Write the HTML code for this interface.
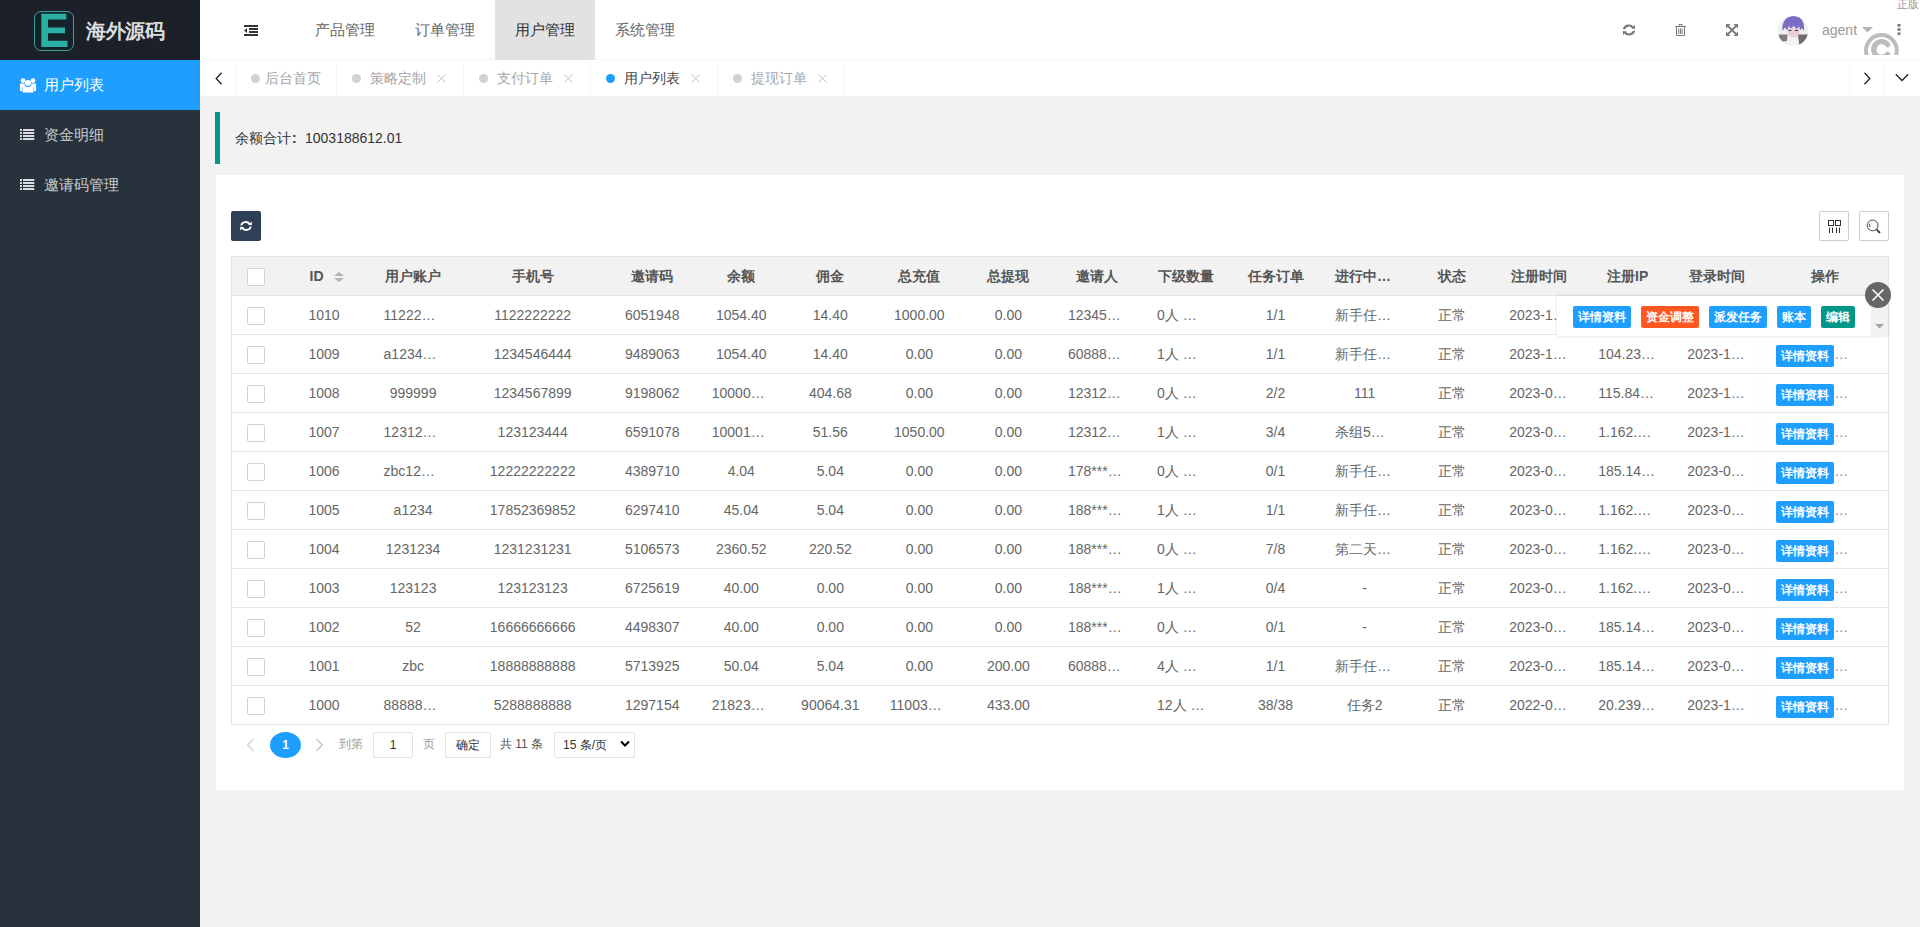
<!DOCTYPE html>
<html><head><meta charset="utf-8">
<style>
*{margin:0;padding:0;box-sizing:border-box}
html,body{width:1920px;height:927px;overflow:hidden;background:#f2f2f2;font-family:"Liberation Sans",sans-serif;font-size:14px;color:#666}
i{font-style:normal}
.abs{position:absolute}
#side{position:absolute;left:0;top:0;width:200px;height:927px;background:#28323c}
#logo{position:absolute;left:0;top:0;width:200px;height:60px;background:#1c2029}
#logo .box{position:absolute;left:34px;top:11px;width:40px;height:40px;border:1.5px solid #3f9e95;border-radius:7px;background:#14232a}
#logo .t{position:absolute;left:86px;top:17px;font-size:20px;font-weight:bold;color:#dedede;line-height:28px;letter-spacing:-0.5px}
.menu{position:absolute;left:0;width:200px;height:50px;color:rgba(255,255,255,.75);font-size:15px;line-height:50px}
.menu.on{background:#1E9FFF;color:#fff}
.menu span{position:absolute;left:44px;top:0}
.menu svg{position:absolute;left:20px}
#hdr{position:absolute;left:200px;top:0;width:1720px;height:60px;background:#fff;border-bottom:1px solid #f6f6f6}
.nav{position:absolute;top:0;height:60px;width:100px;line-height:60px;text-align:center;font-size:15px;color:#666}
.nav.on{background:#e2e2e2;color:#333}
#tabs{position:absolute;left:200px;top:60px;width:1720px;height:36px;background:#fff}
.tab{position:absolute;top:0;height:36px;line-height:36px;border-right:1px solid #f6f6f6;font-size:14px;color:#a6a6a6}
.tab .dot{position:absolute;top:14px;width:9px;height:9px;border-radius:50%;background:#d2d2d2}
.tab .tx{position:absolute;top:0}
.tab svg{position:absolute;top:14px}
#quote{position:absolute;left:215px;top:112px;width:1690px;height:52px;border-left:5px solid #009688;background:#f2f2f2}
#quote span{position:absolute;left:15px;top:17px;line-height:18px;color:#333;font-size:14px}
#card{position:absolute;left:216px;top:175px;width:1688px;height:615px;background:#fff;border-radius:2px}
#tbl{position:absolute;left:231px;top:256px;width:1658px;border:1px solid #e6e6e6;border-collapse:collapse;table-layout:fixed}
#tbl td,#tbl th{height:39px;border-bottom:1px solid #e6e6e6;text-align:center;padding:0 15px;white-space:nowrap;overflow:hidden;font-weight:normal;line-height:20px}
#tbl th{background:#f2f2f2;color:#555;font-weight:bold}
#tbl .l{text-align:left}
#tbl td.op{text-align:left;padding-left:15px}
#tbl td.op .btn{position:relative;top:2px}
.cb{display:inline-block;width:18px;height:18px;border:1px solid #d2d2d2;border-radius:2px;background:#fff;vertical-align:middle}
.btn{display:inline-block;height:22px;line-height:22px;padding:0 5px;font-size:12px;color:#fff;border-radius:2px;background:#1E9FFF;vertical-align:middle;font-weight:bold}
.more{color:#888;position:relative;top:1px}
#tbl th.id{text-align:left;padding-left:30px;position:relative}
.sort{position:absolute;left:54px;top:14px;width:10px;height:12px}
.sort:before{content:"";position:absolute;left:0;top:0.5px;border-left:5px solid transparent;border-right:5px solid transparent;border-bottom:4.5px solid #b2b2b2}
.sort:after{content:"";position:absolute;left:0;top:7px;border-left:5px solid transparent;border-right:5px solid transparent;border-top:4.5px solid #b2b2b2}
.tool{position:absolute;top:211px;width:30px;height:30px;border:1px solid #ccc;border-radius:2px;background:#fff}
#pop{position:absolute;left:1557px;top:296px;width:331px;height:40px;background:#fff;box-shadow:0 0 3px rgba(0,0,0,.15)}
#pop .btn{position:absolute;top:10px}
#pop .sb{position:absolute;right:0;top:0;width:17px;height:40px;background:#f1f1f1}
#close{position:absolute;left:1865px;top:282px;width:26px;height:26px;border-radius:50%;background:#666}
.pg{position:absolute;top:732px;height:26px;line-height:24px;font-size:12px}
.pgb{border:1px solid #e2e2e2;border-radius:2px;background:#fff;text-align:center}
</style></head><body>
<div id="side">
  <div id="logo">
    <div class="box"></div>
    <svg class="abs" style="left:41px;top:13px" width="27" height="35" viewBox="0 0 27 35"><path d="M0.3 0.8H25.3V6.6H7V14.5H24V20.3H7V27.8H26.5V34H0.3Z" fill="#2ab0a3"/></svg>
    <div class="t">海外源码</div>
  </div>
  <div class="menu on" style="top:60px">
    <svg style="top:18px" width="16" height="15" viewBox="0 0 16 15" fill="#fff"><circle cx="3" cy="2.6" r="2.4"/><circle cx="13" cy="2.6" r="2.4"/><circle cx="8" cy="5" r="3"/><path d="M0 5.5H4.5C4.5 7.5 5.5 8.5 6.5 9H2V13H0Z"/><path d="M16 5.5H11.5C11.5 7.5 10.5 8.5 9.5 9H14V13H16Z" /><path d="M2.5 9H13.5V14.5H2.5Z"/></svg>
    <span>用户列表</span></div>
  <div class="menu" style="top:110px">
    <svg style="top:19px" width="15" height="11" viewBox="0 0 15 11" fill="#dcdce2"><rect x="0" y="0" width="2" height="2"/><rect x="3" y="0" width="11.3" height="2"/><rect x="0" y="3" width="2" height="2"/><rect x="3" y="3" width="11.3" height="2"/><rect x="0" y="6" width="2" height="2"/><rect x="3" y="6" width="11.3" height="2"/><rect x="0" y="9" width="2" height="2"/><rect x="3" y="9" width="11.3" height="2"/></svg>
    <span>资金明细</span></div>
  <div class="menu" style="top:160px">
    <svg style="top:19px" width="15" height="11" viewBox="0 0 15 11" fill="#dcdce2"><rect x="0" y="0" width="2" height="2"/><rect x="3" y="0" width="11.3" height="2"/><rect x="0" y="3" width="2" height="2"/><rect x="3" y="3" width="11.3" height="2"/><rect x="0" y="6" width="2" height="2"/><rect x="3" y="6" width="11.3" height="2"/><rect x="0" y="9" width="2" height="2"/><rect x="3" y="9" width="11.3" height="2"/></svg>
    <span>邀请码管理</span></div>
</div>
<div id="hdr">
  <svg class="abs" style="left:44px;top:25px" width="14" height="11" viewBox="0 0 14 11" fill="#333"><rect x="0" y="0" width="14" height="2"/><rect x="5" y="3" width="9" height="2"/><rect x="5" y="6" width="9" height="2"/><rect x="0" y="9" width="14" height="2"/><path d="M0 5.5L3 3V8Z"/></svg>
  <div class="nav" style="left:95px">产品管理</div>
  <div class="nav" style="left:195px">订单管理</div>
  <div class="nav on" style="left:295px">用户管理</div>
  <div class="nav" style="left:395px">系统管理</div>
  <!-- refresh -->
  <svg class="abs" style="left:1422px;top:23px" width="14" height="14" viewBox="0 0 14 14" fill="none" stroke="#7a7a7a" stroke-width="2.2"><path d="M2 6.2A5 4.6 0 0 1 11 4.5"/><path d="M12 7.8A5 4.6 0 0 1 3 9.5"/><path d="M9.2 5.6L13 6V2Z" fill="#7a7a7a" stroke="none"/><path d="M4.8 8.4L1 8V12Z" fill="#7a7a7a" stroke="none"/></svg>
  <!-- trash -->
  <svg class="abs" style="left:1475px;top:24px" width="11" height="12" viewBox="0 0 11 12" fill="none" stroke="#7a7a7a" stroke-width="1"><path d="M0 2.5H11"/><path d="M4 2.5V0.5H7V2.5"/><path d="M1.5 2.5V11.5H9.5V2.5"/><path d="M3.8 4.5V10M5.5 4.5V10M7.2 4.5V10"/></svg>
  <!-- fullscreen -->
  <svg class="abs" style="left:1526px;top:24px" width="12" height="12" viewBox="0 0 12 12" fill="#7a7a7a"><path d="M0 0H4.5L3.2 1.3L6 4.1L10.7 -0.6Z" fill="none"/><path d="M0 0H4.5L0 4.5Z"/><path d="M12 0H7.5L12 4.5Z"/><path d="M0 12H4.5L0 7.5Z"/><path d="M12 12H7.5L12 7.5Z"/><path d="M1.5 1.5L10.5 10.5M10.5 1.5L1.5 10.5" stroke="#7a7a7a" stroke-width="1.8"/></svg>
  <!-- avatar -->
  <svg class="abs" style="left:1578px;top:16px" width="30" height="30" viewBox="0 0 30 30"><defs><clipPath id="av"><circle cx="15" cy="15" r="15"/></clipPath></defs><g clip-path="url(#av)"><rect width="30" height="30" fill="#eef0ee"/><path d="M0 18.4L9.5 18.4L9 25L0 26Z" fill="#7d7a80"/><path d="M20 18.4H30V30H21Z" fill="#6f6b72"/><path d="M9 30C9 23 10 20 15 20C20 20 21 23 21 30Z" fill="#f4f1f4"/><ellipse cx="15.5" cy="15" rx="6.2" ry="6.5" fill="#e9cdd7"/><path d="M4.5 15C3.5 5 9 0 15.5 0C22 0 27 4 26 15L24 12L22.5 14.5L21 10.5L18.5 13L16 9.5L13 12.5L11 10L9 14L7 11.5Z" fill="#7b6cc5"/><path d="M10.5 14.5H13.5M17 14.5H20" stroke="#3a3050" stroke-width="1.2"/></g></svg>
  <div class="abs" style="left:1622px;top:20px;line-height:20px;font-size:14px;color:#999">agent</div>
  <svg class="abs" style="left:1662px;top:27px" width="11" height="6" viewBox="0 0 11 6"><path d="M0 0H11L5.5 5.5Z" fill="#b5b5b5"/></svg>
  <svg class="abs" style="left:1697px;top:24px" width="4" height="11" viewBox="0 0 4 11" fill="#777"><rect x="0.5" y="0" width="3" height="2.6"/><rect x="0.5" y="4.2" width="3" height="2.6"/><rect x="0.5" y="8.4" width="3" height="2.6"/></svg>
  <div class="abs" style="left:1697px;top:-3px;font-size:11px;line-height:14px;color:#9a9a9a;font-family:'Liberation Serif',serif">正版</div>
  <svg class="abs" style="left:1664px;top:33px;overflow:hidden" width="36" height="22" viewBox="0 0 36 22"><circle cx="17.4" cy="17.5" r="15.4" fill="none" stroke="#bdbdbd" stroke-width="4"/><path d="M23.6 11.6A7.8 7.8 0 1 0 23.6 21.4" fill="none" stroke="#bdbdbd" stroke-width="5.3" stroke-linecap="round"/></svg>
</div>
<div id="tabs">
  <div class="abs" style="left:0;top:0;width:37px;height:36px;border-right:1px solid #f6f6f6"></div>
  <svg class="abs" style="left:15px;top:12px" width="8" height="13" viewBox="0 0 8 13"><path d="M6.5 0.8L1.2 6.5L6.5 12.2" fill="none" stroke="#222" stroke-width="1.3"/></svg>
  <div class="tab" style="left:37px;width:100px"><i class="dot" style="left:14px"></i><span class="tx" style="left:28px">后台首页</span></div>
  <div class="tab" style="left:137px;width:127px"><i class="dot" style="left:15px"></i><span class="tx" style="left:33px">策略定制</span><svg style="left:100px" width="9" height="9" viewBox="0 0 9 9"><path d="M0.5 0.5L8.5 8.5M8.5 0.5L0.5 8.5" stroke="#c2c2c2" stroke-width="1"/></svg></div>
  <div class="tab" style="left:264px;width:127px"><i class="dot" style="left:15px"></i><span class="tx" style="left:33px">支付订单</span><svg style="left:100px" width="9" height="9" viewBox="0 0 9 9"><path d="M0.5 0.5L8.5 8.5M8.5 0.5L0.5 8.5" stroke="#c2c2c2" stroke-width="1"/></svg></div>
  <div class="tab" style="left:391px;width:127px;color:#444"><i class="dot" style="left:15px;background:#1E9FFF"></i><span class="tx" style="left:33px">用户列表</span><svg style="left:100px" width="9" height="9" viewBox="0 0 9 9"><path d="M0.5 0.5L8.5 8.5M8.5 0.5L0.5 8.5" stroke="#c2c2c2" stroke-width="1"/></svg></div>
  <div class="tab" style="left:518px;width:127px"><i class="dot" style="left:15px"></i><span class="tx" style="left:33px">提现订单</span><svg style="left:100px" width="9" height="9" viewBox="0 0 9 9"><path d="M0.5 0.5L8.5 8.5M8.5 0.5L0.5 8.5" stroke="#c2c2c2" stroke-width="1"/></svg></div>
  <div class="abs" style="left:1649px;top:0;width:36px;height:36px;border-left:1px solid #f6f6f6;border-right:1px solid #f6f6f6"></div>
  <svg class="abs" style="left:1663px;top:12px" width="8" height="13" viewBox="0 0 8 13"><path d="M1.5 0.8L6.8 6.5L1.5 12.2" fill="none" stroke="#222" stroke-width="1.3"/></svg>
  <svg class="abs" style="left:1695px;top:13px" width="14" height="9" viewBox="0 0 14 9"><path d="M0.8 1.2L7 7.5L13.2 1.2" fill="none" stroke="#222" stroke-width="1.3"/></svg>
</div>
<div id="quote"><span>余额合计<i style="display:inline-block;width:14px;padding-left:1px;font-weight:bold">:</i>1003188612.01</span></div>
<div id="card"></div>
<div class="abs" style="left:231px;top:211px;width:30px;height:30px;background:#2f4056;border-radius:2px"></div>
<svg class="abs" style="left:240px;top:220px" width="12" height="12" viewBox="0 0 12 12" fill="none" stroke="#fff" stroke-width="2"><path d="M1.3 5.4A4.5 4 0 0 1 9.6 4"/><path d="M10.7 6.6A4.5 4 0 0 1 2.4 8"/><path d="M8 5L11.8 5.3V1.5Z" fill="#fff" stroke="none"/><path d="M4 7L0.2 6.7V10.5Z" fill="#fff" stroke="none"/></svg>
<div class="tool" style="left:1819px"></div>
<svg class="abs" style="left:1827px;top:219px" width="15" height="15" viewBox="0 0 15 15" fill="none" stroke="#333" stroke-width="1"><rect x="1.5" y="1.5" width="5" height="5"/><rect x="8.5" y="1.5" width="5" height="5"/><path d="M2.5 8.5V14M5.5 8.5V14M9.5 8.5V14M12.5 8.5V14"/></svg>
<div class="tool" style="left:1859px"></div>
<svg class="abs" style="left:1865px;top:218px" width="17" height="17" viewBox="0 0 17 17" fill="none" stroke="#444" stroke-width="1"><circle cx="7.6" cy="7.4" r="5.4"/><path d="M11.5 11.4L15 15" stroke-width="2"/><path d="M5 5.5Q4 7 5 9" /></svg>
<table id="tbl"><colgroup><col style="width:48px"><col style="width:89px"><col style="width:89px"><col style="width:150px"><col style="width:89px"><col style="width:89px"><col style="width:89px"><col style="width:89px"><col style="width:89px"><col style="width:89px"><col style="width:89px"><col style="width:89px"><col style="width:89px"><col style="width:85px"><col style="width:89px"><col style="width:89px"><col style="width:89px"><col style="width:127px"></colgroup><tr><th><i class="cb"></i></th><th class="id">ID<i class="sort"></i></th><th>用户账户</th><th>手机号</th><th>邀请码</th><th>余额</th><th>佣金</th><th>总充值</th><th>总提现</th><th>邀请人</th><th>下级数量</th><th>任务订单</th><th class="l">进行中…</th><th>状态</th><th>注册时间</th><th>注册IP</th><th>登录时间</th><th>操作</th></tr><tr><td><i class="cb"></i></td><td>1010</td><td class="l">11222…</td><td>1122222222</td><td>6051948</td><td>1054.40</td><td>14.40</td><td>1000.00</td><td>0.00</td><td class="l">12345…</td><td class="l">0人 …</td><td>1/1</td><td class="l">新手任…</td><td>正常</td><td class="l">2023-1…</td><td class="l">104.23…</td><td class="l">2023-1…</td><td class="op"><span class="btn">详情资料</span><span class="more">…</span></td></tr><tr><td><i class="cb"></i></td><td>1009</td><td class="l">a1234…</td><td>1234546444</td><td>9489063</td><td>1054.40</td><td>14.40</td><td>0.00</td><td>0.00</td><td class="l">60888…</td><td class="l">1人 …</td><td>1/1</td><td class="l">新手任…</td><td>正常</td><td class="l">2023-1…</td><td class="l">104.23…</td><td class="l">2023-1…</td><td class="op"><span class="btn">详情资料</span><span class="more">…</span></td></tr><tr><td><i class="cb"></i></td><td>1008</td><td>999999</td><td>1234567899</td><td>9198062</td><td class="l">10000…</td><td>404.68</td><td>0.00</td><td>0.00</td><td class="l">12312…</td><td class="l">0人 …</td><td>2/2</td><td>111</td><td>正常</td><td class="l">2023-0…</td><td class="l">115.84…</td><td class="l">2023-1…</td><td class="op"><span class="btn">详情资料</span><span class="more">…</span></td></tr><tr><td><i class="cb"></i></td><td>1007</td><td class="l">12312…</td><td>123123444</td><td>6591078</td><td class="l">10001…</td><td>51.56</td><td>1050.00</td><td>0.00</td><td class="l">12312…</td><td class="l">1人 …</td><td>3/4</td><td class="l">杀组5…</td><td>正常</td><td class="l">2023-0…</td><td class="l">1.162.…</td><td class="l">2023-1…</td><td class="op"><span class="btn">详情资料</span><span class="more">…</span></td></tr><tr><td><i class="cb"></i></td><td>1006</td><td class="l">zbc12…</td><td>12222222222</td><td>4389710</td><td>4.04</td><td>5.04</td><td>0.00</td><td>0.00</td><td class="l">178***…</td><td class="l">0人 …</td><td>0/1</td><td class="l">新手任…</td><td>正常</td><td class="l">2023-0…</td><td class="l">185.14…</td><td class="l">2023-0…</td><td class="op"><span class="btn">详情资料</span><span class="more">…</span></td></tr><tr><td><i class="cb"></i></td><td>1005</td><td>a1234</td><td>17852369852</td><td>6297410</td><td>45.04</td><td>5.04</td><td>0.00</td><td>0.00</td><td class="l">188***…</td><td class="l">1人 …</td><td>1/1</td><td class="l">新手任…</td><td>正常</td><td class="l">2023-0…</td><td class="l">1.162.…</td><td class="l">2023-0…</td><td class="op"><span class="btn">详情资料</span><span class="more">…</span></td></tr><tr><td><i class="cb"></i></td><td>1004</td><td>1231234</td><td>1231231231</td><td>5106573</td><td>2360.52</td><td>220.52</td><td>0.00</td><td>0.00</td><td class="l">188***…</td><td class="l">0人 …</td><td>7/8</td><td class="l">第二天…</td><td>正常</td><td class="l">2023-0…</td><td class="l">1.162.…</td><td class="l">2023-0…</td><td class="op"><span class="btn">详情资料</span><span class="more">…</span></td></tr><tr><td><i class="cb"></i></td><td>1003</td><td>123123</td><td>123123123</td><td>6725619</td><td>40.00</td><td>0.00</td><td>0.00</td><td>0.00</td><td class="l">188***…</td><td class="l">1人 …</td><td>0/4</td><td>-</td><td>正常</td><td class="l">2023-0…</td><td class="l">1.162.…</td><td class="l">2023-0…</td><td class="op"><span class="btn">详情资料</span><span class="more">…</span></td></tr><tr><td><i class="cb"></i></td><td>1002</td><td>52</td><td>16666666666</td><td>4498307</td><td>40.00</td><td>0.00</td><td>0.00</td><td>0.00</td><td class="l">188***…</td><td class="l">0人 …</td><td>0/1</td><td>-</td><td>正常</td><td class="l">2023-0…</td><td class="l">185.14…</td><td class="l">2023-0…</td><td class="op"><span class="btn">详情资料</span><span class="more">…</span></td></tr><tr><td><i class="cb"></i></td><td>1001</td><td>zbc</td><td>18888888888</td><td>5713925</td><td>50.04</td><td>5.04</td><td>0.00</td><td>200.00</td><td class="l">60888…</td><td class="l">4人 …</td><td>1/1</td><td class="l">新手任…</td><td>正常</td><td class="l">2023-0…</td><td class="l">185.14…</td><td class="l">2023-0…</td><td class="op"><span class="btn">详情资料</span><span class="more">…</span></td></tr><tr><td><i class="cb"></i></td><td>1000</td><td class="l">88888…</td><td>5288888888</td><td>1297154</td><td class="l">21823…</td><td>90064.31</td><td class="l">11003…</td><td>433.00</td><td></td><td class="l">12人 …</td><td>38/38</td><td>任务2</td><td>正常</td><td class="l">2022-0…</td><td class="l">20.239…</td><td class="l">2023-1…</td><td class="op"><span class="btn">详情资料</span><span class="more">…</span></td></tr></table><div class="abs" style="left:1759px;top:257px;width:1px;height:467px;box-shadow:-1px 0 6px rgba(0,0,0,.06)"></div>
<div id="pop">
  <span class="btn" style="left:16px">详情资料</span>
  <span class="btn" style="left:84px;background:#FF5722">资金调整</span>
  <span class="btn" style="left:152px">派发任务</span>
  <span class="btn" style="left:220px">账本</span>
  <span class="btn" style="left:264px;background:#009688">编辑</span>
  <div class="sb"><svg class="abs" style="left:4px;top:28px" width="9" height="5" viewBox="0 0 9 5"><path d="M0 0H9L4.5 4.5Z" fill="#a3a3a3"/></svg></div>
</div>
<div id="close"><svg class="abs" style="left:6px;top:6px" width="14" height="14" viewBox="0 0 14 14"><path d="M1.5 1.5L12.5 12.5M12.5 1.5L1.5 12.5" stroke="#fff" stroke-width="1.6"/></svg></div>
<svg class="abs" style="left:246px;top:738px" width="9" height="14" viewBox="0 0 9 14"><path d="M7.5 1L1.8 7L7.5 13" fill="none" stroke="#d2d2d2" stroke-width="1.5"/></svg>
<div class="abs" style="left:270px;top:732px;width:31px;height:26px;border-radius:50%;background:#1E9FFF;color:#fff;font-size:12px;line-height:26px;text-align:center;font-weight:bold">1</div>
<svg class="abs" style="left:315px;top:738px" width="9" height="14" viewBox="0 0 9 14"><path d="M1.5 1L7.2 7L1.5 13" fill="none" stroke="#c6c6c6" stroke-width="1.5"/></svg>
<div class="pg" style="left:339px;color:#999">到第</div>
<div class="pg pgb" style="left:373px;width:40px;color:#333">1</div>
<div class="pg" style="left:423px;color:#999">页</div>
<div class="pg pgb" style="left:445px;width:46px;color:#333">确定</div>
<div class="pg" style="left:500px;color:#555">共 11 条</div>
<div class="pg pgb" style="left:554px;width:81px;color:#333;text-align:left;padding-left:8px">15 条/页</div>
<svg class="abs" style="left:620px;top:740px" width="10" height="8" viewBox="0 0 10 8"><path d="M1 1.5L5 5.5L9 1.5" fill="none" stroke="#000" stroke-width="2"/></svg>
</body></html>
